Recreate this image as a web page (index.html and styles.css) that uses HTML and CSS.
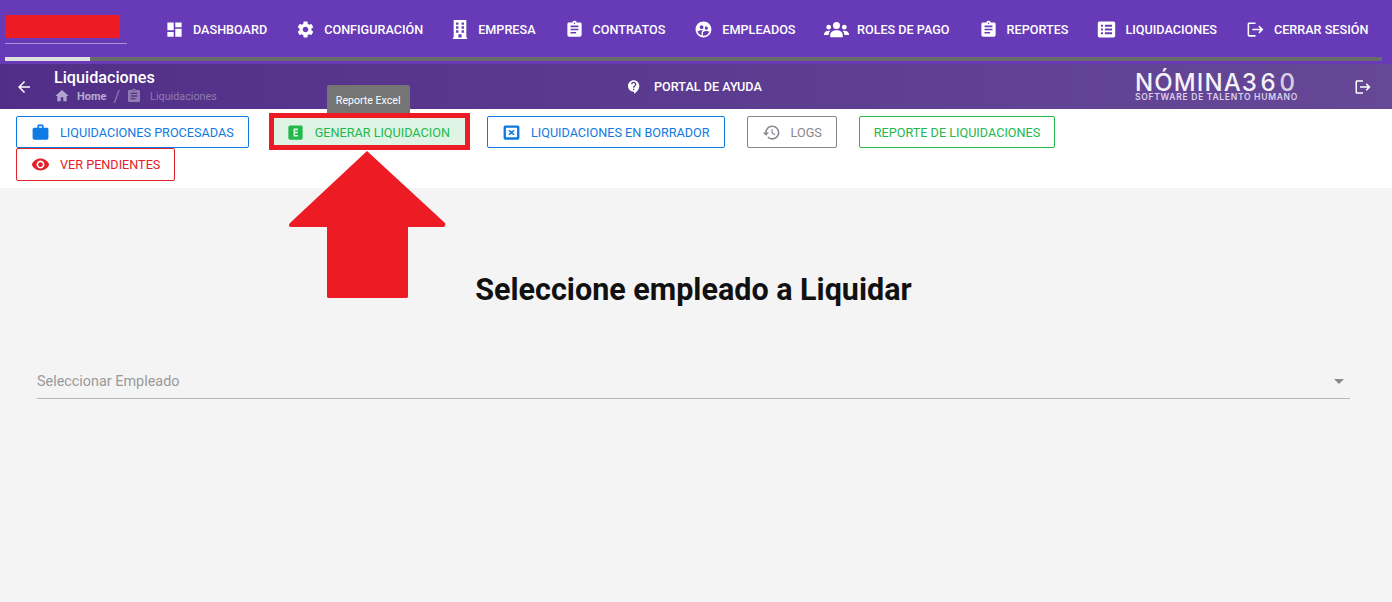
FILE: index.html
```html
<!DOCTYPE html>
<html lang="es">
<head>
<meta charset="utf-8">
<title>Liquidaciones</title>
<link rel="stylesheet" href="styles.css">
</head>
<body>
<header class="topbar">
  <div class="topnav">
    <div class="brand"><div class="brand-mark"></div></div>
    <nav class="menu">
      <a class="menu-item"><svg class="ic" viewBox="0 0 24 24"><path d="M3 13h8V3H3v10zm0 8h8v-6H3v6zm10 0h8V11h-8v10zm0-18v6h8V3h-8z"/></svg>DASHBOARD</a>
      <a class="menu-item"><svg class="ic" viewBox="0 0 24 24"><path d="M19.43 12.98c.04-.32.07-.64.07-.98s-.03-.66-.07-.98l2.11-1.65c.19-.15.24-.42.12-.64l-2-3.46c-.12-.22-.39-.3-.61-.22l-2.49 1c-.52-.4-1.08-.73-1.69-.98l-.38-2.65C14.46 2.18 14.25 2 14 2h-4c-.25 0-.46.18-.49.42l-.38 2.65c-.61.25-1.17.59-1.69.98l-2.49-1c-.23-.09-.49 0-.61.22l-2 3.46c-.13.22-.07.49.12.64l2.11 1.65c-.04.32-.07.65-.07.98s.03.66.07.98l-2.11 1.65c-.19.15-.24.42-.12.64l2 3.46c.12.22.39.3.61.22l2.49-1c.52.4 1.08.73 1.69.98l.38 2.65c.03.24.24.42.49.42h4c.25 0 .46-.18.49-.42l.38-2.65c.61-.25 1.17-.59 1.69-.98l2.49 1c.23.09.49 0 .61-.22l2-3.46c.12-.22.07-.49-.12-.64l-2.11-1.65zM12 15.5c-1.93 0-3.5-1.57-3.5-3.5s1.57-3.5 3.5-3.5 3.5 1.57 3.5 3.5-1.57 3.5-3.5 3.5z"/></svg>CONFIGURACIÓN</a>
      <a class="menu-item"><svg class="ic ic-tower" viewBox="3 0 18 24"><path fill-rule="evenodd" d="M4 0h16v22h1v2H3v-2h1zM7 3v3h3V3zm7 0v3h3V3zM7 8v3h3V8zm7 0v3h3V8zM7 13v3h3v-3zm7 0v3h3v-3zm-4 5v4h4v-4z"/></svg>EMPRESA</a>
      <a class="menu-item"><svg class="ic" viewBox="0 0 24 24"><path d="M19 3h-4.180C14.400 1.840 13.300 1 12 1c-1.300 0-2.400.84-2.820 2H5c-1.100 0-2 .9-2 2v14c0 1.100.9 2 2 2h14c1.100 0 2-.9 2-2V5c0-1.100-.9-2-2-2zm-7 0c.55 0 1 .45 1 1s-.45 1-1 1-1-.45-1-1 .45-1 1-1zm2 14H7v-2h7v2zm3-4H7v-2h10v2zm0-4H7V7h10v2z"/></svg>CONTRATOS</a>
      <a class="menu-item"><svg class="ic" viewBox="0 0 24 24"><path d="M11.990 2c-5.520 0-10 4.480-10 10s4.480 10 10 10 10-4.480 10-10-4.480-10-10-10zm3.610 6.340c1.070 0 1.930.86 1.930 1.930 0 1.070-.86 1.930-1.930 1.930-1.070 0-1.930-.86-1.930-1.930-.01-1.070.86-1.930 1.930-1.930zm-6-1.580c1.300 0 2.360 1.060 2.360 2.360 0 1.300-1.060 2.360-2.360 2.360s-2.360-1.060-2.360-2.360c0-1.310 1.050-2.360 2.360-2.360zm0 9.130v3.750c-2.400-.75-4.300-2.600-5.140-4.960 1.050-1.120 3.670-1.690 5.140-1.690.53 0 1.200.08 1.900.22-1.640.87-1.900 2.020-1.900 2.680zM11.990 20c-.27 0-.53-.01-.79-.04v-4.070c0-1.420 2.940-2.130 4.400-2.130 1.070 0 2.920.39 3.840 1.150-1.170 2.970-4.060 5.090-7.450 5.090z"/></svg>EMPLEADOS</a>
      <a class="menu-item"><svg class="ic ic-wide" viewBox="0 0 32 24"><circle cx="16" cy="7" r="4.500"/><circle cx="6" cy="9" r="3"/><circle cx="26" cy="9" r="3"/><path d="M8 22v-3c0-3.500 3.500-6 8-6s8 2.500 8 6v3zM0 19v-1c0-2.500 2.500-4.500 6-4.500 1 0 1.500.1 2 .3C6.800 15 6 16.800 6 19zM32 19v-1c0-2.500-2.500-4.500-6-4.500-1 0-1.500.1-2 .3 1.200 1.200 2 3 2 5.200z"/></svg>ROLES DE PAGO</a>
      <a class="menu-item"><svg class="ic" viewBox="0 0 24 24"><path d="M19 3h-4.180C14.400 1.840 13.300 1 12 1c-1.300 0-2.400.84-2.820 2H5c-1.100 0-2 .9-2 2v14c0 1.100.9 2 2 2h14c1.100 0 2-.9 2-2V5c0-1.100-.9-2-2-2zm-7 0c.55 0 1 .45 1 1s-.45 1-1 1-1-.45-1-1 .45-1 1-1zm2 14H7v-2h7v2zm3-4H7v-2h10v2zm0-4H7V7h10v2z"/></svg>REPORTES</a>
      <a class="menu-item"><svg class="ic" viewBox="0 0 24 24"><path fill-rule="evenodd" d="M3 2h18a2 2 0 0 1 2 2v16a2 2 0 0 1-2 2H3a2 2 0 0 1-2-2V4a2 2 0 0 1 2-2zm2 4v2.500h2.500V6zm5 0v2.500h9V6zm-5 4.750v2.500h2.500v-2.500zm5 0v2.500h9v-2.500zM5 15.500V18h2.500v-2.500zm5 0V18h9v-2.500z"/></svg>LIQUIDACIONES</a>
      <a class="menu-item"><svg class="ic" viewBox="0 0 24 24"><path d="M17 7l-1.410 1.410L18.170 11H8v2h10.170l-2.580 2.580L17 17l5-5zM4 5h8V3H4c-1.100 0-2 .9-2 2v14c0 1.100.9 2 2 2h8v-2H4V5z"/></svg>CERRAR SESIÓN</a>
    </nav>
  </div>
  <div class="progress"><div class="progress-fill"></div></div>
</header>

<section class="subbar">
  <svg class="back" viewBox="0 0 24 24"><path d="M20 11H7.830l5.590-5.590L12 4l-8 8 8 8 1.410-1.410L7.830 13H20v-2z"/></svg>
  <div class="crumbs">
    <div class="page-title">Liquidaciones</div>
    <div class="trail">
      <svg class="trail-ic" viewBox="0 0 24 24"><path d="M10 20v-6h4v6h5v-8h3L12 3 2 12h3v8z"/></svg>
      <span class="trail-home">Home</span>
      <span class="trail-sep">/</span>
      <svg class="trail-ic trail-ic-dim" viewBox="0 0 24 24"><path d="M19 3h-4.180C14.400 1.840 13.300 1 12 1c-1.300 0-2.400.84-2.820 2H5c-1.100 0-2 .9-2 2v14c0 1.100.9 2 2 2h14c1.100 0 2-.9 2-2V5c0-1.100-.9-2-2-2zm-7 0c.55 0 1 .45 1 1s-.45 1-1 1-1-.45-1-1 .45-1 1-1zm2 14H7v-2h7v2zm3-4H7v-2h10v2zm0-4H7V7h10v2z"/></svg>
      <span class="trail-current">Liquidaciones</span>
    </div>
  </div>
  <a class="help"><svg class="help-ic" viewBox="0 0 24 24"><path d="M11.500 2C6.810 2 3 5.810 3 10.500S6.810 19 11.500 19h.5v3c4.860-2.340 8-7 8-11.500C20 5.810 16.190 2 11.500 2zm1 14.500h-2v-2h2v2zm.4-4.780c-.01.01-.02.03-.03.05-.05.08-.1.16-.14.24-.02.03-.03.07-.04.11-.03.07-.06.14-.08.21-.07.21-.1.43-.1.68H10.500c0-.51.08-.94.2-1.300 0-.01 0-.02.01-.03.01-.04.04-.06.05-.1.06-.16.13-.3.22-.44.03-.05.07-.1.1-.15.03-.04.05-.09.08-.12l.01.01c.84-1.100 2.210-1.440 2.320-2.680.09-.98-.61-1.930-1.570-2.130-1.040-.22-1.980.39-2.300 1.280-.14.36-.47.65-.88.65h-.2c-.6 0-1.040-.59-.87-1.170.55-1.820 2.370-3.090 4.430-2.790 1.690.25 3.040 1.640 3.330 3.330.44 2.440-1.630 3.030-2.780 4.820z"/></svg>PORTAL DE AYUDA</a>
  <div class="logo">
    <div class="logo-name">NÓMINA<span class="logo-num">36<span class="logo-zero">0</span></span></div>
    <div class="logo-tag">SOFTWARE DE TALENTO HUMANO</div>
  </div>
  <svg class="sub-exit" viewBox="0 0 24 24"><path d="M17 7l-1.410 1.410L18.170 11H8v2h10.170l-2.580 2.580L17 17l5-5zM4 5h8V3H4c-1.100 0-2 .9-2 2v14c0 1.100.9 2 2 2h8v-2H4V5z"/></svg>
</section>

<section class="actions">
  <div class="action-row">
    <a class="btn btn-blue"><svg class="btn-ic" viewBox="0 0 24 24"><path d="M20 6h-4V4c0-1.100-.9-2-2-2h-4c-1.100 0-2 .9-2 2v2H4c-1.100 0-2 .9-2 2v11c0 1.100.9 2 2 2h16c1.100 0 2-.9 2-2V8c0-1.100-.9-2-2-2zm-6 0h-4V4h4v2z"/></svg>LIQUIDACIONES PROCESADAS</a>
    <span class="btn-wrap">
      <a class="btn btn-green-fill"><svg class="btn-ic" viewBox="0 0 24 24"><path fill-rule="evenodd" d="M5 3h14a2 2 0 0 1 2 2v14a2 2 0 0 1-2 2H5a2 2 0 0 1-2-2V5a2 2 0 0 1 2-2zm4.500 4v10h5.500v-2h-3.500v-2h3.500v-2h-3.500V9h3.500V7z"/></svg>GENERAR LIQUIDACION</a>
      <span class="tooltip">Reporte Excel</span>
      <span class="highlight"></span>
    </span>
    <a class="btn btn-blue"><svg class="btn-ic" viewBox="0 0 24 24"><path fill-rule="evenodd" d="M4 3h16a2 2 0 0 1 2 2v14a2 2 0 0 1-2 2H4a2 2 0 0 1-2-2V5a2 2 0 0 1 2-2zm1 3v12h14V6zm4 2.500l3 2 3-2 1 1.300-2.600 2.200 2.600 2.200-1 1.300-3-2-3 2-1-1.300 2.600-2.200L8 9.800z"/></svg>LIQUIDACIONES EN BORRADOR</a>
    <a class="btn btn-grey"><svg class="btn-ic" viewBox="0 0 24 24"><path d="M13 3c-4.970 0-9 4.030-9 9H1l3.890 3.890.07.14L9 12H6c0-3.870 3.130-7 7-7s7 3.130 7 7-3.130 7-7 7c-1.930 0-3.680-.79-4.940-2.060l-1.420 1.420C8.270 19.990 10.510 21 13 21c4.970 0 9-4.030 9-9s-4.030-9-9-9zm-1 5v5l4.280 2.540.72-1.210-3.500-2.080V8H12z"/></svg>LOGS</a>
    <a class="btn btn-green">REPORTE DE LIQUIDACIONES</a>
  </div>
  <div class="action-row">
    <a class="btn btn-red"><svg class="btn-ic" viewBox="0 0 24 24"><path d="M12 4.500C7 4.500 2.730 7.610 1 12c1.730 4.390 6 7.500 11 7.500s9.270-3.110 11-7.500c-1.730-4.390-6-7.500-11-7.500zM12 17c-2.760 0-5-2.240-5-5s2.240-5 5-5 5 2.240 5 5-2.240 5-5 5zm0-8c-1.660 0-3 1.340-3 3s1.340 3 3 3 3-1.340 3-3-1.340-3-3-3z"/></svg>VER PENDIENTES</a>
  </div>
</section>

<main class="content">
  <h1 class="heading">Seleccione empleado a Liquidar</h1>
  <div class="field">
    <span class="field-label">Seleccionar Empleado</span>
    <span class="field-arrow"></span>
  </div>
</main>

<svg class="big-arrow" viewBox="0 0 157 147"><path d="M78 0 L156 72 Q157 75 155 76 L119 76 L119 146 L118 147 L39 147 L38 146 L38 76 L1 76 Q-1 74 1 72 Z"/></svg>
</body>
</html>
```
FILE: styles.css
```css
* { box-sizing: border-box; }
html, body { margin: 0; padding: 0; }
body {
  height: 602px;
  overflow: hidden;
  position: relative;
  background: #f4f4f4;
  font-family: Roboto, "Liberation Sans", sans-serif;
}
.topbar { height: 64px; background: #673ab7; }
.topnav { display: flex; height: 57px; padding-left: 5px; }
.brand {
  width: 122px;
  height: 44px;
  padding-top: 15px;
  border-bottom: 1px solid rgba(255,255,255,.45);
}
.brand-mark { width: 115px; height: 23px; background: #ed1c24; }
.menu { display: flex; align-items: flex-start; padding: 20px 0 0 38px; }
.menu-item {
  display: flex;
  align-items: center;
  height: 19px;
  margin-right: 29px;
  color: #fff;
  font-size: 12.63px;
  font-weight: 500;
  white-space: nowrap;
}
.menu-item:last-child { margin-right: 0; }
.ic { width: 19px; height: 19px; margin-right: 9px; fill: #fff; flex: none; }
.ic-tower { width: 16px; margin-right: 10px; }
.ic-wide { width: 25px; margin-right: 7.5px; }
.progress { margin: 0 10px 0 5px; height: 4px; background: #6b6b6b; }
.progress-fill { width: 85px; height: 4px; background: #e0e0e0; }

.subbar {
  height: 45px;
  display: flex;
  align-items: center;
  background: linear-gradient(90deg, #512f88, #664897);
  padding-left: 15px;
}
.back { width: 18px; height: 18px; fill: #fff; flex: none; margin-right: 21px; }
.crumbs { width: 300px; flex: none; }
.page-title { color: #fff; font-size: 16.2px; font-weight: 500; line-height: 18px; margin-top: -1px; }
.trail { display: flex; align-items: center; height: 15px; margin-top: 2px; }
.trail-ic { width: 16px; height: 16px; fill: #b3a3cf; flex: none; margin-right: 7px; }
.trail-ic-dim { fill: #8f7cb3; margin-right: 8px; }
.trail-home { color: #b9abd2; font-size: 11px; font-weight: 700; }
.trail-sep { color: #8f7cb3; font-size: 16px; margin: 0 6px 0 7px; }
.trail-current { color: #8f7cb3; font-size: 10.8px; }
.help {
  display: flex;
  align-items: center;
  color: #fff;
  font-size: 12.63px;
  font-weight: 500;
  margin-left: 272px;
  width: 509px;
  white-space: nowrap;
}
.help-ic { width: 16px; height: 16px; fill: #fff; margin-right: 12px; flex: none; }
.logo { width: 164px; flex: none; color: #f5f2fa; }
.logo-name {
  font-family: Inter, "Open Sans", sans-serif;
  font-size: 24px;
  font-weight: 500;
  line-height: 20px;
  letter-spacing: 1.1px;
  white-space: nowrap;
}
.logo-num { letter-spacing: 3.8px; }
.logo-zero { opacity: .8; }
.logo-tag {
  font-family: Inter, "Open Sans", sans-serif;
  font-size: 8.5px;
  font-weight: 600;
  line-height: 8px;
  letter-spacing: .72px;
  color: #d9d2e8;
  white-space: nowrap;
}
.sub-exit { width: 18px; height: 18px; fill: #fff; margin-left: 55px; flex: none; }

.actions {
  height: 79px;
  background: #fff;
  padding: 7px 0 0 16px;
}
.action-row { display: flex; column-gap: 22px; }
.btn {
  display: inline-flex;
  align-items: center;
  height: 32.4px;
  padding: 0 14px;
  border: 1px solid;
  border-radius: 2px;
  font-size: 12.65px;
  font-weight: 400;
  white-space: nowrap;
  background: #fff;
}
.btn-ic { width: 19px; height: 19px; margin-right: 10px; flex: none; fill: currentColor; }
.btn-blue { color: #0f7ae3; border-color: #0f7ae3; }
.btn-grey { color: #88858e; border-color: #88858e; }
.btn-green { color: #22b84c; border-color: #22b84c; }
.btn-red { color: #e32128; border-color: #e32128; }
.btn-green-fill { color: #22b84c; border-color: transparent; background: #dff4e4; }
.btn-wrap { position: relative; display: inline-flex; }
.tooltip {
  position: absolute;
  left: 56px;
  top: -31px;
  width: 83px;
  height: 28px;
  background: #757575;
  border-radius: 2px 2px 0 0;
  color: #fff;
  font-size: 10.6px;
  line-height: 31px;
  text-align: center;
  white-space: nowrap;
}
.highlight {
  position: absolute;
  left: -2px;
  top: -3px;
  width: 201px;
  height: 37px;
  border: 5px solid #ed1c24;
  pointer-events: none;
}

.content { padding: 0 42px 0 37px; }
.heading {
  margin: 86px 0 0;
  text-align: center;
  font-size: 30.5px;
  font-weight: 700;
  line-height: 32px;
  color: #111;
}
.field {
  margin-top: 57px;
  height: 36px;
  padding-top: 2px;
  display: flex;
  align-items: center;
  justify-content: space-between;
  border-bottom: 1px solid #b8b8b8;
}
.field-label { color: #9a9a9a; font-size: 14.4px; }
.field-arrow {
  width: 0;
  height: 0;
  margin-right: 6px;
  border-left: 5px solid transparent;
  border-right: 5px solid transparent;
  border-top: 5px solid #8a8a8a;
}
.big-arrow {
  position: absolute;
  left: 289px;
  top: 151px;
  width: 157px;
  height: 147px;
  fill: #ed1c24;
}
```
